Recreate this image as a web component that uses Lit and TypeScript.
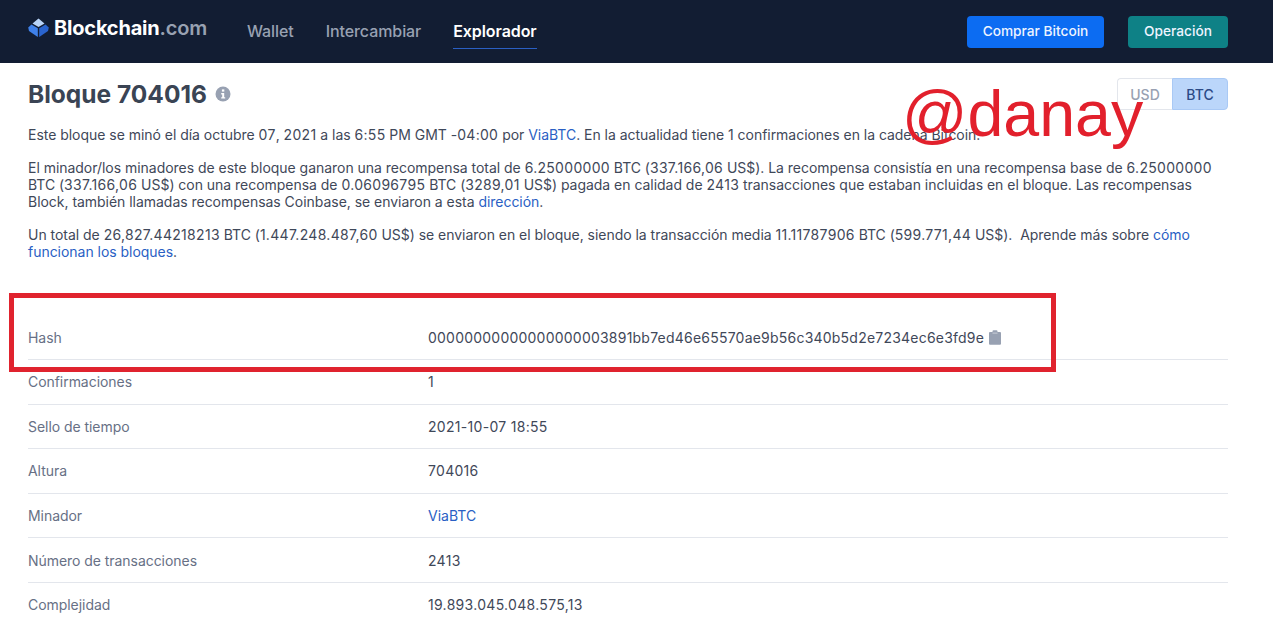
import { LitElement, html, css } from "lit";
import { customElement } from "lit/decorators.js";

const rows: [string, string, boolean?][] = [
  ["Confirmaciones", "1"],
  ["Sello de tiempo", "2021-10-07 18:55"],
  ["Altura", "704016"],
  ["Minador", "ViaBTC", true],
  ["Número de transacciones", "2413"],
  ["Complejidad", "19.893.045.048.575,13"],
];

const num = (t: string) =>
  t.split(/(\d[\d.,:]*\d)/).map((s, i) => (i % 2 ? html`<span class="n">${s}</span>` : s));

@customElement("app-root")
export class AppRoot extends LitElement {
  static styles = css`
    :host { display: block; position: relative; width: 1273px; height: 621px; overflow: hidden; background: #fff; font-family: Inter, "Liberation Sans", sans-serif; color: #353f52; font-size: 14px; }
    a { color: #2a5fc4; text-decoration: none; }
    .nav { height: 63px; background: #121d33; display: flex; align-items: center; padding: 0 45px 0 28px; box-sizing: border-box; }
    .logo { display: flex; align-items: center; gap: 5px; margin-top: -8px; width: 219px; font-size: 20px; font-weight: 700; color: #fff; letter-spacing: -0.2px; }
    .logo svg { width: 21px; height: 20px; }
    .logo span { color: #98a1b2; font-weight: 600; }
    .links { display: flex; gap: 32px; flex: 1; height: 63px; font-size: 16px; font-weight: 500; color: #98a1b2; letter-spacing: -0.08px; }
    .link { height: 49px; display: flex; align-items: flex-end; padding-bottom: 8px; box-sizing: border-box; line-height: 20px; }
    .link.on { color: #fff; font-weight: 600; padding-bottom: 7px; border-bottom: 1px solid #2a5fc4; }
    .btn { height: 32px; padding-bottom: 2px; border-radius: 4px; display: flex; align-items: center; justify-content: center; color: #eef4ff; font-size: 13.7px; font-weight: 500; box-sizing: border-box; }
    .buy { width: 137px; background: #0c6cf2; margin-right: 24px; }
    .op { width: 100px; background: #0e8186; }
    .main { padding: 0 45px 0 28px; }
    .head { display: flex; justify-content: space-between; height: 62.5px; }
    h1 { margin: 15px 0 0; height: 32px; font-size: 24.5px; line-height: 32px; font-weight: 700; color: #3a4454; display: flex; align-items: center; gap: 8px; }
    h1 svg { width: 16px; height: 16px; }
    .toggle { display: flex; height: 32px; margin-top: 15px; border-radius: 4px; font-weight: 500; }
    .toggle div { display: flex; align-items: center; justify-content: center; box-sizing: border-box; }
    .usd { width: 55px; border: 1px solid #e3e6ec; border-right: 0; border-radius: 4px 0 0 4px; color: #98a1b2; }
    .btc { width: 56px; background: #bbd6fa; border: 1px solid #a9c9f5; border-radius: 0 4px 4px 0; color: #2c4a86; }
    p { margin: 0 0 16px; line-height: 17px; font-size: 14px; color: #3f4859; letter-spacing: -0.03px; }
    .n { letter-spacing: 0.3px; }
    .table { margin-top: 55.9px; }
    .row { display: flex; align-items: center; height: 44.6px; box-sizing: border-box; border-bottom: 1px solid #e3e6ec; font-size: 14px; }
    .k { width: 400px; color: #677085; letter-spacing: -0.05px; }
    .v { color: #3f4859; display: flex; align-items: center; gap: 5px; letter-spacing: 0.3px; }
    .v.hash { letter-spacing: 0.22px; }
    .v a { letter-spacing: 0; }
    .v svg { width: 12px; height: 15px; }
    .mark { position: absolute; left: 902px; top: 73px; font-family: "Liberation Sans", sans-serif; font-size: 64.5px; line-height: 83px; color: #e2202c; }
    .box { position: absolute; left: 9px; top: 293px; width: 1047px; height: 79px; box-sizing: border-box; border: 5px solid #e0232e; }
  `;

  render() {
    return html`
      <div class="nav">
        <div class="logo">
          <svg viewBox="0 0 21 20">
            <path d="M10.5 0.5 L16.5 5.5 L10.5 9 L4.5 5.5Z" fill="#b9d4f8"/>
            <path d="M3.5 6.5 L9.8 10.2 V19 L1 13 L0.2 9.5Z" fill="#3f81ea"/>
            <path d="M17.5 6.5 L11.2 10.2 V19 L20 13 L20.8 9.5Z" fill="#2a64cf"/>
          </svg>
          <div>Blockchain<span>.com</span></div>
        </div>
        <div class="links">
          <div class="link">Wallet</div>
          <div class="link">Intercambiar</div>
          <div class="link on">Explorador</div>
        </div>
        <div class="btn buy">Comprar Bitcoin</div>
        <div class="btn op">Operación</div>
      </div>
      <div class="main">
        <div class="head">
          <h1>Bloque 704016
            <svg viewBox="0 0 16 16"><circle cx="8" cy="8" r="7.5" fill="#98a1b2"/><rect x="6.9" y="3.4" width="2.4" height="2.2" fill="#fff"/><path d="M6.2 7h3v4.2h1v1.4H6.2v-1.4h1V8.4h-1z" fill="#fff"/></svg>
          </h1>
          <div class="toggle"><div class="usd">USD</div><div class="btc">BTC</div></div>
        </div>
        <p>${num("Este bloque se minó el día octubre 07, 2021 a las 6:55 PM GMT -04:00 por ")}<a>ViaBTC</a>. En la actualidad tiene 1 confirmaciones en la cadena Bitcoin.</p>
        <p>${num("El minador/los minadores de este bloque ganaron una recompensa total de 6.25000000 BTC (337.166,06 US$). La recompensa consistía en una recompensa base de 6.25000000 BTC (337.166,06 US$) con una recompensa de 0.06096795 BTC (3289,01 US$) pagada en calidad de 2413 transacciones que estaban incluidas en el bloque. Las recompensas Block, también llamadas recompensas Coinbase, se enviaron a esta ")}<a>dirección</a>.</p>
        <p>${num("Un total de 26,827.44218213 BTC (1.447.248.487,60 US$) se enviaron en el bloque, siendo la transacción media 11.11787906 BTC (599.771,44 US$).\u00a0 Aprende más sobre ")}<a>cómo funcionan los bloques</a>.</p>
        <div class="table">
          <div class="row">
            <div class="k">Hash</div>
            <div class="v hash">00000000000000000003891bb7ed46e65570ae9b56c340b5d2e7234ec6e3fd9e
              <svg viewBox="0 0 12 15"><path d="M1 2h2.5V1.2a1 1 0 0 1 1-1h3a1 1 0 0 1 1 1V2H11a1 1 0 0 1 1 1v10.8a1 1 0 0 1-1 1H1a1 1 0 0 1-1-1V3a1 1 0 0 1 1-1z" fill="#98a1b2"/><rect x="3.5" y="2.6" width="5" height="1" fill="#c9ced8"/></svg>
            </div>
          </div>
          ${rows.map(([k, v, l]) => html`<div class="row"><div class="k">${k}</div><div class="v">${l ? html`<a>${v}</a>` : v}</div></div>`)}
        </div>
      </div>
      <div class="mark">@danay</div>
      <div class="box"></div>
    `;
  }
}
